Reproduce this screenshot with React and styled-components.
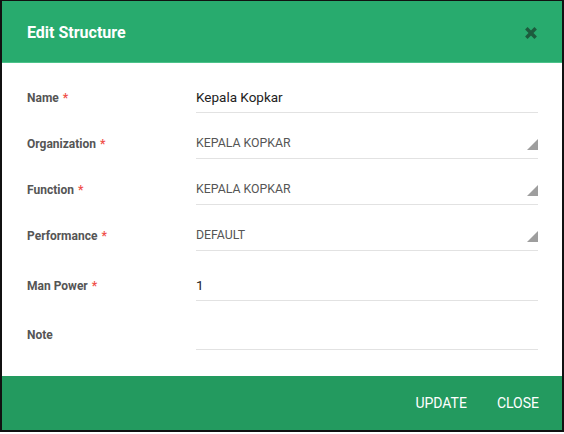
import styled, { createGlobalStyle } from 'styled-components';

const GlobalStyle = createGlobalStyle`
    html, body {
        margin: 0;
        padding: 0;
        background: #fff;
        font-family: Roboto, "Liberation Sans", sans-serif;
    }
`;

const fields = [
    { label: 'Name', value: 'Kepala Kopkar', required: true, top: 20 },
    { label: 'Organization', value: 'KEPALA KOPKAR', required: true, select: true, top: 16 },
    { label: 'Function', value: 'KEPALA KOPKAR', required: true, select: true, top: 16 },
    { label: 'Performance', value: 'DEFAULT', required: true, select: true, top: 16 },
    { label: 'Man Power', value: '1', required: true, top: 20 },
    { label: 'Note', value: '', top: 19 },
];

function App() {
    return (
        <>
            <GlobalStyle />
            <Dialog>
                <Header>
                    <Title>Edit Structure</Title>
                    <CloseIcon viewBox="0 0 12 12">
                        <path d="M2 2 L10 10 M10 2 L2 10" />
                    </CloseIcon>
                </Header>
                <Body>
                    {fields.map((f) => (
                        <Field key={f.label} $top={f.top}>
                            <Label>
                                {f.label}
                                {f.required && <Star>*</Star>}
                            </Label>
                            <Value $select={f.select}>
                                {f.value}
                                {f.select && <Caret />}
                            </Value>
                        </Field>
                    ))}
                </Body>
                <Footer>
                    <Action>UPDATE</Action>
                    <Action>CLOSE</Action>
                </Footer>
            </Dialog>
        </>
    );
}

const Dialog = styled.div`
    width: 564px;
    height: 432px;
    box-sizing: border-box;
    border: 2px solid #111;
    border-top-width: 1px;
    display: flex;
    flex-direction: column;
    background: #fff;
`;

const Header = styled.div`
    height: 61px;
    background: #28ab6e;
    border-bottom: 1px solid #4cc28a;
    display: flex;
    align-items: center;
    justify-content: space-between;
    padding: 0 24px 0 25px;
`;

const Title = styled.div`
    color: #fff;
    font-size: 16px;
    font-weight: 700;
    margin-top: 2px;
`;

const CloseIcon = styled.svg`
    width: 14px;
    height: 14px;
    fill: none;
    stroke: #1d5b3d;
    stroke-width: 3;
    margin-top: 3px;
`;

const Body = styled.div`
    flex: 1;
    padding: 0 24px 0 25px;
`;

const Field = styled.div`
    display: grid;
    grid-template-columns: 169px 1fr;
    align-items: center;
    margin-top: ${(p) => p.$top}px;
`;

const Label = styled.div`
    font-size: 12px;
    font-weight: 700;
    color: #555;
    margin-top: -1px;
`;

const Star = styled.span`
    color: #f0504a;
    margin-left: 4px;
`;

const Value = styled.div`
    position: relative;
    height: 30px;
    box-sizing: border-box;
    border-bottom: 1px solid #e2e2e2;
    font-size: ${(p) => (p.$select ? '12.3px' : '13.5px')};
    line-height: 29px;
    color: ${(p) => (p.$select ? '#555' : '#222')};
`;

const Caret = styled.span`
    position: absolute;
    right: 0;
    top: 10px;
    width: 0;
    height: 0;
    border-left: 11px solid transparent;
    border-bottom: 11px solid #9e9e9e;
`;

const Footer = styled.div`
    height: 54px;
    background: #239a5f;
    display: flex;
    align-items: center;
    justify-content: flex-end;
    gap: 30px;
    padding-right: 23px;
`;

const Action = styled.button`
    background: none;
    border: none;
    padding: 0;
    color: #fff;
    font-family: Roboto, "Liberation Sans", sans-serif;
    font-size: 14px;
    font-weight: 400;
    cursor: pointer;
`;

export default App;
